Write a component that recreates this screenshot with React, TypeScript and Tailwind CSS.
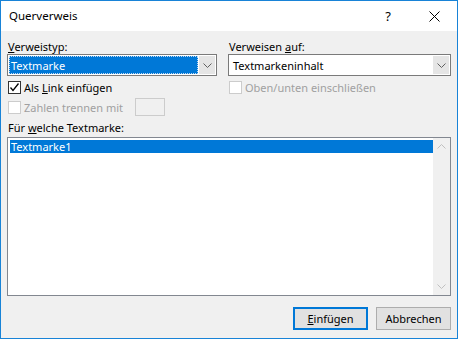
import React from "react"

const font = { fontFamily: '"Noto Sans", "Open Sans", sans-serif' }

const Chevron = ({ up = false, color = "#606060" }: { up?: boolean; color?: string }) => (
    <svg width="9" height="5" viewBox="0 0 9 5" className={up ? "rotate-180" : ""}>
        <path d="M0.5 0.5 L4.5 4.5 L8.5 0.5" fill="none" stroke={color} strokeWidth="1" />
    </svg>
)

const Combo = ({ value, focused = false, width }: { value: string; focused?: boolean; width: string }) => (
    <div className={`${width} h-[22px] flex border border-[#7a7a7a] bg-white`}>
        <div className="flex-1 flex items-center p-[1px]">
            {focused ? (
                <div className="h-full w-full bg-[#0078d7] text-white flex items-center pl-[2px] outline outline-1 outline-dotted outline-[#c0d8f0] -outline-offset-1">
                    {value}
                </div>
            ) : (
                <div className="pl-[3px]">{value}</div>
            )}
        </div>
        <div className="w-[16px] m-[1px] ml-0 bg-[#e5e5e5] flex items-center justify-center">
            <Chevron />
        </div>
    </div>
)

const CheckBox = ({ checked = false, disabled = false }: { checked?: boolean; disabled?: boolean }) => (
    <div className={`w-[13px] h-[13px] shrink-0 border bg-white flex items-center justify-center ${disabled ? "border-[#cccccc]" : "border-[#333333]"}`}>
        {checked && (
            <svg width="11" height="11" viewBox="0 0 11 11">
                <path d="M1.5 5.5 L4 8.5 L9.5 1.5" fill="none" stroke="#000" strokeWidth="1.3" />
            </svg>
        )}
    </div>
)

export default function App() {
    return (
        <div style={font} className="w-[458px] h-[339px] border border-[#1883d7] flex flex-col text-[11px] text-black leading-none overflow-hidden">
            {/* title bar */}
            <div className="h-[30px] bg-white flex items-center shrink-0">
                <div className="pl-[8px] flex-1 text-[11.5px]">Querverweis</div>
                <div className="w-[46px] h-full flex items-center justify-center text-[13px]">?</div>
                <div className="w-[46px] h-full flex items-center justify-center">
                    <svg width="11" height="11" viewBox="0 0 11 11">
                        <path d="M0.5 0.5 L10.5 10.5 M10.5 0.5 L0.5 10.5" stroke="#000" strokeWidth="1" />
                    </svg>
                </div>
            </div>

            <div className="flex-1 bg-[#f0f0f0] px-[6px] pt-[7px] flex flex-col">
                <div className="flex gap-[11px]">
                    <div className="flex flex-col">
                        <div className="h-[16px] flex items-center pl-[1px]">
                            <span><span className="underline">V</span>erweistyp:</span>
                        </div>
                        <Combo value="Textmarke" focused width="w-[210px]" />
                        <div className="h-[18px] mt-[2px] flex items-center gap-[3px] pl-[1px]">
                            <CheckBox checked />
                            <span>Als <span className="underline">L</span>ink einfügen</span>
                        </div>
                        <div className="h-[18px] mt-[2px] flex items-center pl-[1px]">
                            <CheckBox disabled />
                            <span className="ml-[3px] text-[#a0a0a0]">Zahlen trennen mit</span>
                            <div className="ml-[12px] w-[30px] h-[18px] border border-[#cccccc] bg-[#f0f0f0]"></div>
                        </div>
                    </div>
                    <div className="flex flex-col flex-1">
                        <div className="h-[16px] flex items-center pl-[1px]">
                            <span>Verweisen <span className="underline">a</span>uf:</span>
                        </div>
                        <Combo value="Textmarkeninhalt" width="w-full" />
                        <div className="h-[18px] mt-[2px] flex items-center gap-[3px] pl-[1px]">
                            <CheckBox disabled />
                            <span className="text-[#a0a0a0]">Oben/unten einschließen</span>
                        </div>
                    </div>
                </div>

                <div className="h-[16px] mt-[3px] flex items-center pl-[1px]">
                    <span>Für <span className="underline">w</span>elche Textmarke:</span>
                </div>
                <div className="h-[159px] mt-[2px] border border-[#828790] bg-white flex">
                    <div className="flex-1 p-[2px] pr-0">
                        <div className="h-[13px] bg-[#0078d7] text-white flex items-center pl-[1px]">Textmarke1</div>
                    </div>
                    <div className="w-[17px] bg-[#f0f0f0] flex flex-col justify-between items-center py-[6px]">
                        <Chevron up color="#c0c0c0" />
                        <Chevron color="#c0c0c0" />
                    </div>
                </div>

                <div className="mt-[11px] flex justify-end gap-[8px]">
                    <div className="w-[75px] h-[23px] border-2 border-[#0078d7] bg-[#e1e1e1] flex items-center justify-center">
                        <span><span className="underline">E</span>infügen</span>
                    </div>
                    <div className="w-[75px] h-[23px] border border-[#adadad] bg-[#e1e1e1] flex items-center justify-center">
                        Abbrechen
                    </div>
                </div>
            </div>
        </div>
    )
}
